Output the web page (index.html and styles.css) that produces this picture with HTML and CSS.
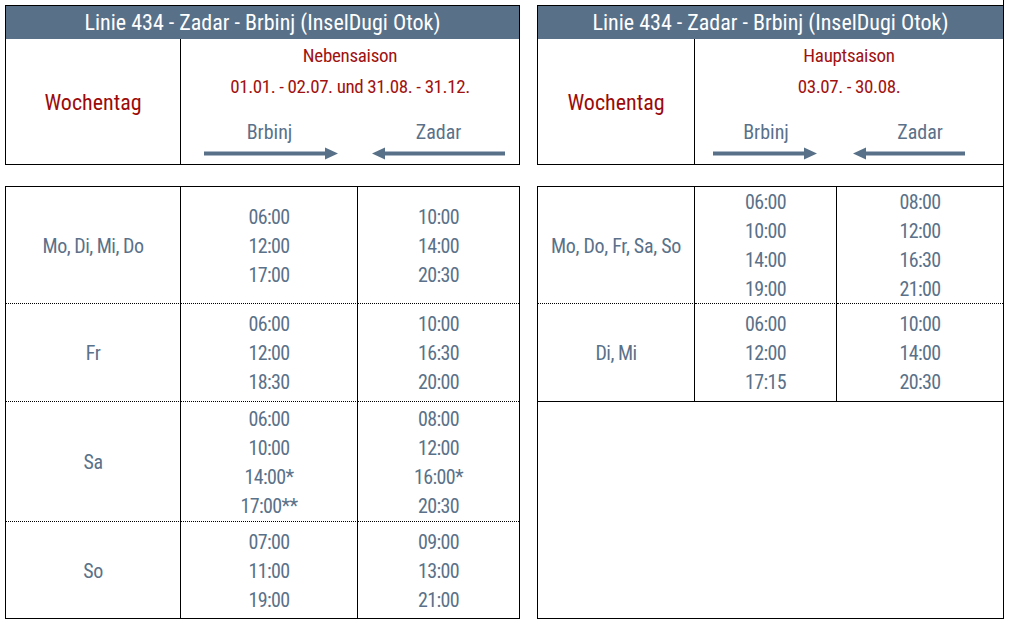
FILE: index.html
```html
<!DOCTYPE html>
<html lang="de">
<head>
<meta charset="utf-8">
<title>Linie 434 - Zadar - Brbinj</title>
<link rel="stylesheet" href="styles.css">
</head>
<body>
<div class="page">
  <section class="panel panel-left">
    <div class="head">
      <div class="title">Linie 434 - Zadar - Brbinj (InselDugi Otok)</div>
      <div class="head-row">
        <div class="day-h">Wochentag</div>
        <div class="season">
          <div class="season-name">Nebensaison</div>
          <div class="season-dates">01.01. - 02.07. und 31.08. - 31.12.</div>
          <div class="dirs">
            <div class="dir">
              <span class="dir-name">Brbinj</span>
              <svg class="arrow a-l1" width="134" height="13" viewBox="0 0 134 13"><path class="shaft" d="M0 6.5H122"/><path class="tip" d="M121 0.5L134 6.5L121 12.5Z"/></svg>
            </div>
            <div class="dir">
              <span class="dir-name">Zadar</span>
              <svg class="arrow a-l2" width="133" height="13" viewBox="0 0 133 13"><path class="shaft" d="M12 6.5H133"/><path class="tip" d="M13 0.5L0 6.5L13 12.5Z"/></svg>
            </div>
          </div>
        </div>
      </div>
    </div>
    <div class="grid grid-left">
      <div class="c day dot">Mo, Di, Mi, Do</div>
      <div class="c t dot"><span>06:00</span><span>12:00</span><span>17:00</span></div>
      <div class="c t dot last"><span>10:00</span><span>14:00</span><span>20:30</span></div>

      <div class="c day dot">Fr</div>
      <div class="c t dot"><span>06:00</span><span>12:00</span><span>18:30</span></div>
      <div class="c t dot last"><span>10:00</span><span>16:30</span><span>20:00</span></div>

      <div class="c day dot">Sa</div>
      <div class="c t dot"><span>06:00</span><span>10:00</span><span>14:00*</span><span>17:00**</span></div>
      <div class="c t dot last"><span>08:00</span><span>12:00</span><span>16:00*</span><span>20:30</span></div>

      <div class="c day">So</div>
      <div class="c t"><span>07:00</span><span>11:00</span><span>19:00</span></div>
      <div class="c t last"><span>09:00</span><span>13:00</span><span>21:00</span></div>
    </div>
  </section>

  <section class="panel panel-right">
    <div class="head">
      <div class="title">Linie 434 - Zadar - Brbinj (InselDugi Otok)</div>
      <div class="head-row">
        <div class="day-h">Wochentag</div>
        <div class="season">
          <div class="season-name">Hauptsaison</div>
          <div class="season-dates">03.07. - 30.08.</div>
          <div class="dirs">
            <div class="dir">
              <span class="dir-name">Brbinj</span>
              <svg class="arrow a-r1" width="104" height="13" viewBox="0 0 104 13"><path class="shaft" d="M0 6.5H92"/><path class="tip" d="M91 0.5L104 6.5L91 12.5Z"/></svg>
            </div>
            <div class="dir">
              <span class="dir-name">Zadar</span>
              <svg class="arrow a-r2" width="112" height="13" viewBox="0 0 112 13"><path class="shaft" d="M12 6.5H112"/><path class="tip" d="M13 0.5L0 6.5L13 12.5Z"/></svg>
            </div>
          </div>
        </div>
      </div>
    </div>
    <div class="grid grid-right">
      <div class="c day dot day-long">Mo, Do, Fr, Sa, So</div>
      <div class="c t dot"><span>06:00</span><span>10:00</span><span>14:00</span><span>19:00</span></div>
      <div class="c t dot last"><span>08:00</span><span>12:00</span><span>16:30</span><span>21:00</span></div>

      <div class="c day solid">Di, Mi</div>
      <div class="c t solid"><span>06:00</span><span>12:00</span><span>17:15</span></div>
      <div class="c t solid last"><span>10:00</span><span>14:00</span><span>20:30</span></div>

      <div class="c empty"></div>
    </div>
  </section>
</div>
</body>
</html>
```

FILE: styles.css
```css
* { box-sizing: border-box; }

html, body {
  margin: 0;
  padding: 0;
  background: #ffffff;
}

body {
  font-family: "Roboto", "DejaVu Sans", sans-serif;
  font-stretch: condensed;
  color: #5a7189;
  width: 1011px;
  height: 625px;
  overflow: hidden;
}

.page {
  display: flex;
  align-items: flex-start;
  padding-left: 5px;
}

.panel {
  display: flex;
  flex-direction: column;
  padding-top: 5px;
}

.panel-left { width: 515px; }

.panel-right {
  width: 467px;
  margin-left: 17px;
  border-right: 1px solid #000;
}

.head {
  border: 1px solid #000;
  display: flex;
  flex-direction: column;
}

.panel-right .head { border-right: none; }

.title {
  height: 33px;
  line-height: 33px;
  background: #587189;
  color: #ffffff;
  text-align: center;
  font-size: 22px;
}

.head-row {
  display: flex;
  height: 125px;
}

.day-h {
  border-right: 1px solid #000;
  display: flex;
  align-items: center;
  justify-content: center;
  color: #9c0a0a;
  font-size: 22px;
  padding-top: 2px;
}

.panel-left .day-h { width: 175px; }
.panel-right .day-h { width: 157px; }

.season {
  flex: 1;
  display: flex;
  flex-direction: column;
  align-items: stretch;
  padding-top: 2px;
  color: #a01212;
  text-align: center;
}

.season-name {
  font-size: 19px;
  letter-spacing: -0.3px;
  line-height: 30px;
}

.season-dates {
  font-size: 19px;
  letter-spacing: -0.4px;
  line-height: 32px;
}

.dirs {
  display: grid;
  margin-top: 14px;
}

.panel-left .dirs { grid-template-columns: 177px 161px; }
.panel-right .dirs { grid-template-columns: 142px 166px; }

.dir {
  display: flex;
  flex-direction: column;
}

.dir-name {
  color: #5a7189;
  font-size: 20px;
  line-height: 30px;
  text-align: center;
}

.arrow {
  display: block;
}

.arrow .shaft {
  stroke: #587189;
  stroke-width: 4;
  fill: none;
}

.arrow .tip {
  fill: #587189;
}

.a-l1 { margin-left: 23px; }
.a-l2 { margin-left: 14px; }
.a-r1 { margin-left: 18px; }
.a-r2 { margin-left: 16px; }

.grid {
  display: grid;
  margin-top: 21px;
  border: 1px solid #000;
}

.grid-left {
  grid-template-columns: 175px 177px 161px;
  grid-template-rows: 117px 98px 120px 96px;
}

.grid-right {
  border-right: none;
  grid-template-columns: 157px 142px 166px;
  grid-template-rows: 117px 98px 216px;
}

.c {
  border-right: 1px solid #000;
  display: flex;
  flex-direction: column;
  align-items: center;
  justify-content: center;
  padding-top: 2px;
  font-size: 20px;
  line-height: 29px;
  color: #5a7189;
  white-space: nowrap;
}

.c.t { letter-spacing: -0.6px; }
.c.day { letter-spacing: -0.5px; }
.c.day-long { letter-spacing: -0.3px; }

.c.last { border-right: none; }

.c.dot { border-bottom: 1px dotted #000; }
.c.solid { border-bottom: 1px solid #000; }

.c.t span { display: block; }

.c.empty {
  grid-column: 1 / 4;
  border-right: none;
}
```
